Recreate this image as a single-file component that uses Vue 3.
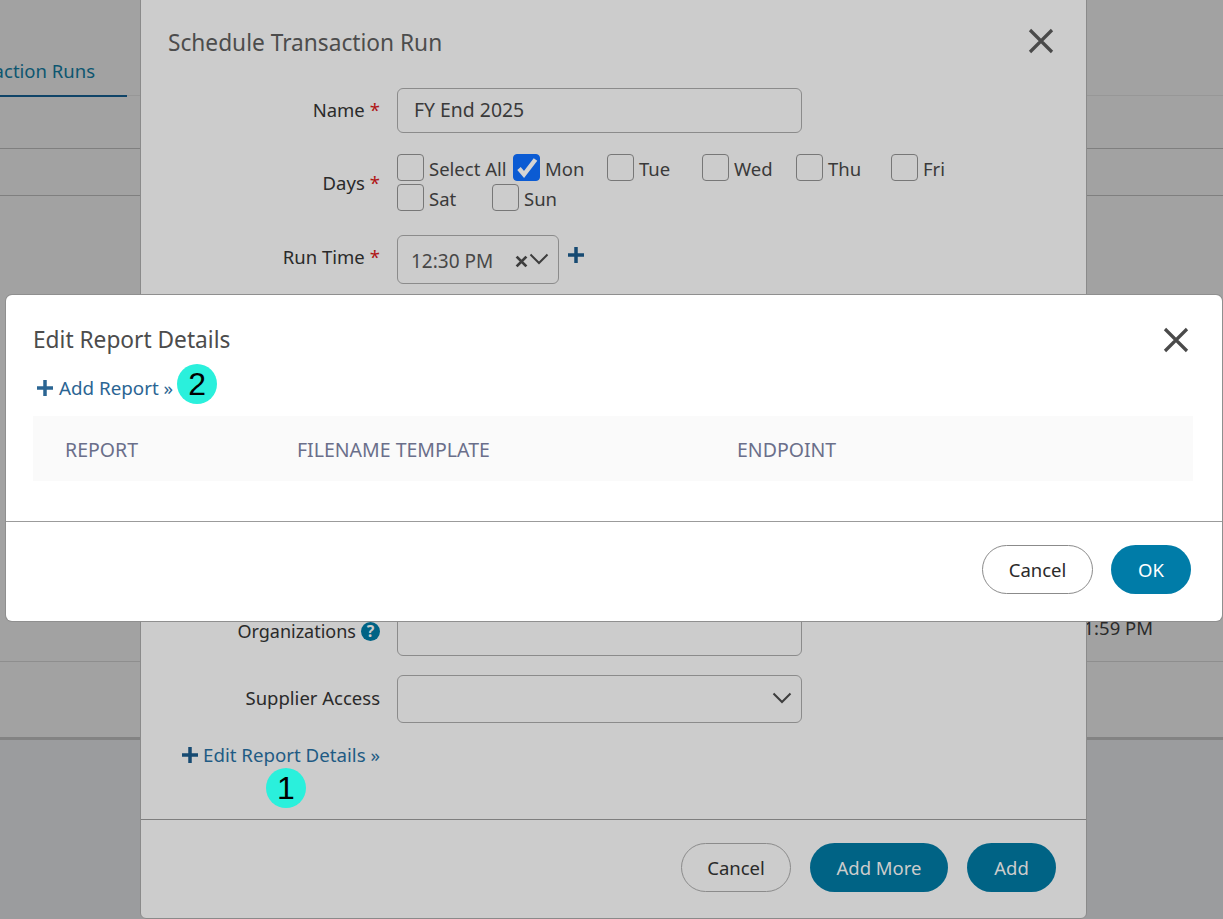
<script setup>
const dayRows = [
  [
    { label: 'Select All', width: 116 },
    { label: 'Mon', width: 94, checked: true },
    { label: 'Tue', width: 95 },
    { label: 'Wed', width: 94 },
    { label: 'Thu', width: 95 },
    { label: 'Fri', width: 60 }
  ],
  [
    { label: 'Sat', width: 95 },
    { label: 'Sun', width: 60 }
  ]
]
</script>

<template>
  <div class="screen">
    <div class="page">
      <div class="tabs">
        <div class="tab">Transaction Runs</div>
      </div>
      <div class="row r1"></div>
      <div class="row r2"></div>
      <div class="row r3"><span class="time">11:59 PM</span></div>
      <div class="row r4"></div>
      <div class="foot"></div>
    </div>

    <section class="modal back">
      <header class="back-head">
        <h2>Schedule Transaction Run</h2>
        <svg class="close" width="26" height="26" viewBox="0 0 26 26"><path d="M2 2 24 24M24 2 2 24" /></svg>
      </header>
      <div class="form">
        <div class="field f-name">
          <label>Name <i>*</i></label>
          <div class="input">FY End 2025</div>
        </div>
        <div class="field f-days">
          <label>Days <i>*</i></label>
          <div class="days">
            <div v-for="(row, r) in dayRows" :key="r" class="day-row">
              <span v-for="d in row" :key="d.label" class="day" :style="{ width: d.width + 'px' }">
                <span class="box" :class="{ on: d.checked }">
                  <svg v-if="d.checked" width="24" height="24" viewBox="0 0 24 24"><path d="M4 12.500 9 18.500 20.500 3.500" /></svg>
                </span>
                <span class="day-text">{{ d.label }}</span>
              </span>
            </div>
          </div>
        </div>
        <div class="field f-time">
          <label>Run Time <i>*</i></label>
          <div class="select">
            <span>12:30 PM</span>
            <svg class="x" width="13" height="13" viewBox="0 0 12 12"><path d="M1.500 1.500 10.500 10.500M10.500 1.500 1.500 10.500" /></svg>
            <svg class="chev" width="20" height="12" viewBox="0 0 20 12"><path d="M1.500 1.500 10 10 18.500 1.500" /></svg>
          </div>
          <svg class="plus small" width="18" height="18" viewBox="0 0 18 18"><path d="M9 1V17M1 9H17" /></svg>
        </div>
        <div class="hidden-gap"></div>
        <div class="field f-org">
          <label>Organizations
            <svg class="help" width="19" height="19" viewBox="0 0 18 18">
              <circle cx="9" cy="9" r="9" />
              <text x="9" y="14" text-anchor="middle">?</text>
            </svg>
          </label>
          <div class="input"></div>
        </div>
        <div class="field f-sup">
          <label>Supplier Access</label>
          <div class="input tall sel">
            <svg class="chev" width="20" height="12" viewBox="0 0 20 12"><path d="M1.500 1.500 10 10 18.500 1.500" /></svg>
          </div>
        </div>
        <div class="edit-link">
          <svg class="plus" width="18" height="18" viewBox="0 0 18 18"><path d="M9 1V17M1 9H17" /></svg>
          <span>Edit Report Details »</span>
        </div>
      </div>
      <footer class="back-foot">
        <button class="btn ghost w110">Cancel</button>
        <button class="btn dark w138">Add More</button>
        <button class="btn dark w89">Add</button>
      </footer>
    </section>

    <span class="badge b1">1</span>

    <section class="modal front">
      <header class="front-head">
        <h2>Edit Report Details</h2>
        <svg class="close" width="26" height="26" viewBox="0 0 26 26"><path d="M2 2 24 24M24 2 2 24" /></svg>
      </header>
      <div class="add-row">
        <svg class="plus bright" width="18" height="18" viewBox="0 0 18 18"><path d="M9 1V17M1 9H17" /></svg>
        <span class="add-link">Add Report »</span>
        <span class="badge b2">2</span>
      </div>
      <div class="thead">
        <span class="c1">REPORT</span>
        <span class="c2">FILENAME TEMPLATE</span>
        <span class="c3">ENDPOINT</span>
      </div>
      <footer class="front-foot">
        <button class="btn ghost w111">Cancel</button>
        <button class="btn teal w80">OK</button>
      </footer>
    </section>
  </div>
</template>

<style>
html, body { margin: 0; padding: 0; }
</style>

<style scoped>
.screen {
  position: relative;
  width: 1223px;
  height: 919px;
  overflow: hidden;
  background: #a2a2a2;
  font-family: "Noto Sans", sans-serif;
  font-size: 18.500px;
  color: #2a2a2a;
}
.page { display: flex; flex-direction: column; height: 100%; }
.tabs { height: 96px; box-sizing: border-box; border-bottom: 1px solid #979797; position: relative; }
.tab {
  position: absolute; right: 1096px; top: 58px; height: 39px; white-space: nowrap; box-sizing: border-box;
  color: #0d5670; border-bottom: 2px solid #0f4468; width: 170px; text-align: right; line-height: 25px;
  padding-right: 32px; display: flex; justify-content: flex-end;
}
.row { box-sizing: border-box; border-bottom: 1px solid #7f7f7f; }
.r1 { height: 53px; }
.r2 { height: 47px; }
.r3 { height: 466px; border-bottom-color: #8e8e8e; position: relative; }
.time { position: absolute; right: 70px; bottom: 21px; }
.r4 { height: 78px; border-bottom: 3px solid #838383; }
.foot { flex: 1; background: #9b9c9e; }

.modal { position: absolute; box-sizing: border-box; }
.back {
  left: 140px; top: -20px; width: 947px; height: 939px;
  background: #cccccc; border: 1px solid #8a8a8a; border-radius: 6px;
  display: flex; flex-direction: column;
}
h2 { margin: 0; font-size: 22.700px; font-weight: 400; color: #4c4c4c; }
.back-head h2 { padding-top: 3px; }
.close path { stroke: currentColor; stroke-width: 3.200; fill: none; }
.back-head {
  display: flex; justify-content: space-between; align-items: center;
  padding: 28px 32px 0 27px; height: 63px; color: #4a4a4a;
}
.form { flex: 1; position: relative; }
.field { display: flex; align-items: flex-start; }
.field label { width: 239px; text-align: right; flex: none; margin-right: 17px; line-height: 44px; display: flex; justify-content: flex-end; align-items: center; gap: 5px; white-space: nowrap; }
label i { color: #b01515; font-style: normal; }
.input {
  box-sizing: border-box; width: 405px; height: 45px; border: 1px solid #8b8b8b; border-radius: 6px;
  padding-left: 16px; line-height: 41px; position: relative; font-size: 19.400px; color: #3a3a3a;
}
.f-name { margin-top: 16px; }
.f-days { margin-top: 21px; }
.f-days label { line-height: 57px; }
.days { display: flex; flex-direction: column; gap: 3px; }
.day-row { display: flex; height: 27px; }
.day { display: flex; align-items: center; gap: 5px; white-space: nowrap; color: #3a3a3a; line-height: 27px; }
.day-text { padding-top: 2px; }
.box { box-sizing: border-box; flex: none; width: 27px; height: 27px; border: 1.500px solid #777; border-radius: 4px; display: inline-flex; align-items: center; justify-content: center; }
.box.on { background: #0b5bd3; border-color: #0b5bd3; }
.box path { stroke: #d4d4d4; stroke-width: 4.500; fill: none; }
.f-time { margin-top: 24px; }
.select {
  box-sizing: border-box; width: 162px; height: 49px; border: 1px solid #8b8b8b; border-radius: 6px;
  display: flex; align-items: center; padding: 3px 9px 0 13px; color: #474747; font-size: 19px;
}
.select span { flex: 1; }
.x path { stroke: #3d3d3d; stroke-width: 2.600; fill: none; }
.chev { fill: none; }
.chev path { stroke: #3d3d3d; stroke-width: 2; fill: none; }
.select .chev { margin-left: 1px; margin-top: -4px; }
.plus path { stroke: #164a72; stroke-width: 3.500; fill: none; }
.plus.small { margin: 11px 0 0 8px; }
.plus.bright path { stroke: #2b6593; }
.hidden-gap { height: 327px; }
.tall { height: 48px; }
.f-org label { line-height: 40px; font-size: 18px; }
.f-sup { margin-top: 19px; }
.f-sup label { line-height: 46px; }
.help circle { fill: #006385; }
.help text { fill: #ccc; font: 700 15px "Noto Sans", sans-serif; }
.sel .chev { position: absolute; right: 9px; top: 16px; }
.edit-link {
  display: flex; justify-content: flex-end; align-items: center; gap: 4px; width: 239px;
  margin-top: 17px; color: #1f5b84; line-height: 30px; white-space: nowrap; font-size: 18.700px;
}
.back-foot {
  height: 99px; box-sizing: border-box; border-top: 1px solid #7e7e7e;
  display: flex; justify-content: flex-end; align-items: flex-start; gap: 19px; padding: 23px 30px 0 0;
}
.btn {
  box-sizing: border-box; height: 49px; border-radius: 25px; font: inherit; padding: 0;
  border: 1px solid transparent;
}
.w110 { width: 110px; }
.w138 { width: 138px; }
.w89 { width: 89px; }
.w111 { width: 111px; }
.w80 { width: 80px; }
.ghost { background: transparent; border-color: #8b8b8b; color: #2a2a2a; }
.dark { background: #006385; color: #ccc; }
.teal { background: #007ca8; color: #fff; }

.front {
  left: 6px; top: 295px; width: 1216px; height: 326px;
  background: #fff; border-radius: 6px; display: flex; flex-direction: column;
  box-shadow: 0 0 0 1px #8f8f8f;
}
.front-head {
  display: flex; justify-content: space-between; align-items: center;
  padding: 31px 33px 0 27px; height: 27px; color: #4a4a4a;
}
.add-row { display: flex; align-items: center; padding: 15px 0 0 30px; height: 40px; color: #2b6593; }
.add-link { margin: 0 0 0 5px; font-size: 18.800px; }
.badge {
  display: flex; align-items: center; justify-content: center; width: 40px; height: 40px; border-radius: 50%;
  background: #2af0dc; color: #000; font: 32px "Liberation Sans", sans-serif;
}
.b1 { position: absolute; left: 266px; top: 768px; }
.b2 { margin: -8px 0 0 4px; }
.thead {
  margin: 8px 29px 0 27px; height: 65px; background: #fafafa; display: flex; align-items: center;
  color: #6a6f8a; position: relative; font-size: 19.500px;
}
.c1, .c2, .c3 { position: absolute; top: 20px; line-height: 27px; }
.c1 { left: 32px; }
.c2 { left: 264px; }
.c3 { left: 704px; }
.front-foot {
  margin-top: 40px; border-top: 1px solid #9b9b9b; flex: 1;
  display: flex; justify-content: flex-end; align-items: flex-start; gap: 18px; padding: 23px 31px 0 0;
}
</style>
